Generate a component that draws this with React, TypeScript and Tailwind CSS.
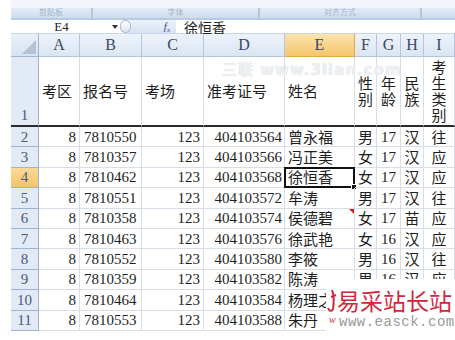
import React from 'react';

const serif = { fontFamily: '"Liberation Serif", "Noto Sans CJK SC", serif' };
const cjkFont = { fontFamily: '"Noto Sans CJK SC", sans-serif' };

const cols = ['A', 'B', 'C', 'D', 'E', 'F', 'G', 'H', 'I'];

// rows 10 and 11 lose their last columns under the site watermark
const rows: string[][] = [
  ['8', '7810550', '123', '404103564', '曾永福', '男', '17', '汉', '往'],
  ['8', '7810357', '123', '404103566', '冯正美', '女', '17', '汉', '应'],
  ['8', '7810462', '123', '404103568', '徐恒香', '女', '17', '汉', '应'],
  ['8', '7810551', '123', '404103572', '牟涛', '男', '17', '汉', '往'],
  ['8', '7810358', '123', '404103574', '侯德碧', '女', '17', '苗', '应'],
  ['8', '7810463', '123', '404103576', '徐武艳', '女', '16', '汉', '应'],
  ['8', '7810552', '123', '404103580', '李筱', '男', '16', '汉', '往'],
  ['8', '7810359', '123', '404103582', '陈涛', '男', '16', '汉', '应'],
  ['8', '7810464', '123', '404103584', '杨理之', '', '', '', ''],
  ['8', '7810553', '123', '404103588', '朱丹', '', '', '', ''],
];

// per-column alignment of data cells
const align = [
  'justify-end pr-[3px]',
  'justify-start pl-[4px]',
  'justify-end pr-[3px]',
  'justify-end pr-[2px]',
  'justify-start pl-[3px]',
  'justify-center',
  'justify-center',
  'justify-center',
  'justify-center',
];

const cell = 'border-r border-b border-[#d8dee8] flex items-center text-[15px] leading-[18px] text-[#1e1e1e] whitespace-nowrap';
const rowHead = 'border-r border-b border-[#9fb4cf] flex items-center justify-center text-[15px] leading-[18px] text-[#4a5b7b]';

const headers = [
  { t: ['考区'], c: 'justify-start pl-[3px]' },
  { t: ['报名号'], c: 'justify-start pl-[3px]' },
  { t: ['考场'], c: 'justify-start pl-[3px]' },
  { t: ['准考证号'], c: 'justify-start pl-[3px]' },
  { t: ['姓名'], c: 'justify-start pl-[3px]' },
  { t: ['性', '别'], c: 'justify-center' },
  { t: ['年', '龄'], c: 'justify-center' },
  { t: ['民', '族'], c: 'justify-center' },
  { t: ['考', '生', '类', '别'], c: 'justify-center' },
];

export default function App() {
  return (
    <div className="relative w-[455px] h-[340px] bg-white overflow-hidden" style={serif}>
      {/* ribbon remnants */}
      <div className="h-[8px] ml-[11px] bg-[#f2f6fb]" />
      <div className="h-[10px] ml-[11px] bg-gradient-to-b from-[#e3ecf7] to-[#cddcee] flex text-[8px] leading-[10px] text-[#a3b5cd]">
        <div className="w-[80px] flex justify-center items-center">剪贴板</div>
        <div className="w-[2px] border-x border-[#b3c6de]" />
        <div className="w-[165px] flex justify-center items-center">字体</div>
        <div className="w-[2px] border-x border-[#b3c6de]" />
        <div className="w-[160px] flex justify-center items-center">对齐方式</div>
        <div className="w-[2px] border-x border-[#b3c6de]" />
      </div>
      <div className="h-[2px] ml-[11px] bg-[#b7cbe3]" />

      {/* formula bar */}
      <div className="h-[14px] ml-[11px] flex items-center bg-white border-b border-[#c9d6e8]">
        <div className="w-[101px] flex items-center justify-center text-[13px] leading-[14px] text-[#222]">E4</div>
        <div className="w-[8px] flex items-center">
          <svg width="6" height="4" viewBox="0 0 6 4"><path d="M0 0h6L3 4z" fill="#333" /></svg>
        </div>
        <div className="w-[56px] h-[13px] flex items-center rounded-l-full bg-gradient-to-b from-[#eef3fa] to-[#d6e2f1] relative">
          <div className="w-[11px] h-[13px] rounded-full border border-[#9db4d1] bg-gradient-to-b from-white to-[#dbe6f3]" />
          <span className="absolute right-[6px] italic text-[11px] leading-[13px] text-[#3d4f6f]">f<sub className="text-[7px]">x</sub></span>
        </div>
        <div className="pl-[8px] text-[14px] leading-[14px] text-[#222]" style={cjkFont}>徐恒香</div>
      </div>

      {/* sheet grid */}
      <div className="grid grid-cols-[11px_28px_41px_62px_62px_81px_70px_22px_24px_23px_31px] grid-rows-[23px_70px_repeat(10,20.4px)]">
        {/* column header row */}
        <div className="bg-white" />
        <div className="bg-gradient-to-b from-[#e9f0f9] to-[#d7e2f0] border-r border-b border-[#9fb4cf] relative">
          <svg className="absolute right-[2px] bottom-[2px]" width="14" height="14" viewBox="0 0 14 14">
            <path d="M14 0V14H0z" fill="#b4c2d4" />
          </svg>
        </div>
        {cols.map((c) => (
          <div
            key={c}
            className={`${c === 'E' ? 'bg-gradient-to-b from-[#fbe3ad] to-[#f6c56c] border-[#e0a94a]' : 'bg-gradient-to-b from-[#eef3fa] to-[#dbe5f2] border-[#b5c6dc]'} border-r border-b flex items-center justify-center text-[16px] text-[#384868]`}
          >
            {c}
          </div>
        ))}

        {/* row 1 */}
        <div className="bg-white" />
        <div className="border-r border-b-2 border-[#9fb4cf] border-b-[#2a2a2a] bg-[#e2eaf6] flex items-end justify-center pb-[1px] text-[15px] leading-[18px] text-[#4a5b7b]">1</div>
        {headers.map((h, i) => (
          <div
            key={i}
            className={`border-r border-b-2 border-r-[#d8dee8] border-b-[#2a2a2a] flex items-center ${h.c} text-[15px] text-[#1e1e1e] whitespace-nowrap`}
            style={cjkFont}
          >
            <div className="flex flex-col items-center leading-[16px]">
              {h.t.map((t, j) => (
                <span key={j}>{t}</span>
              ))}
            </div>
          </div>
        ))}

        {/* data rows */}
        {rows.map((r, ri) => {
          const n = ri + 2;
          const sel = n === 4;
          return (
            <React.Fragment key={n}>
              <div className="bg-white" />
              <div className={`${rowHead} ${sel ? 'bg-gradient-to-b from-[#fad999] to-[#f5c36a]' : 'bg-[#e2eaf6]'}`}>{n}</div>
              {r.map((v, ci) => {
                const cjk = ci >= 4 && ci !== 6;
                return (
                  <div
                    key={ci}
                    className={`${cell} ${align[ci]} relative`}
                    style={cjk ? cjkFont : undefined}
                  >
                    {v}
                    {sel && ci === 4 && (
                      <div className="absolute inset-[-1px] border-2 border-[#111]">
                        <div className="absolute right-[-4px] bottom-[-4px] w-[6px] h-[6px] bg-[#111] border border-white" />
                      </div>
                    )}
                    {n === 6 && ci === 4 && (
                      <svg className="absolute right-0 top-0" width="5" height="5" viewBox="0 0 5 5">
                        <path d="M0 0h5v5z" fill="#d02020" />
                      </svg>
                    )}
                  </div>
                );
              })}
            </React.Fragment>
          );
        })}
      </div>

      {/* faint site watermark near top */}
      <div
        className="absolute left-[222px] top-[59px] text-[15px] font-bold text-[#eef0f3] tracking-[1px] whitespace-nowrap"
        style={{ fontFamily: '"DejaVu Sans", "Noto Sans CJK SC", sans-serif', textShadow: '0 0 1px #c9cfd8' }}
      >
        三联 www.3lian.com
      </div>

      {/* bottom right watermark */}
      <div className="absolute left-[326px] top-[279px] right-0 bottom-0 bg-white">
        <svg className="absolute left-[1px] top-[10px]" width="10" height="24" viewBox="0 0 10 24">
          <path d="M5 1 C7 6 7 14 6 20 C5 23 2 22 1 19 M4 8 L9 6" stroke="#d0283c" strokeWidth="2" fill="none" />
        </svg>
        <div
          className="absolute left-[11px] top-[8px] text-[23px] leading-[26px] text-[#d3263d] whitespace-nowrap"
          style={cjkFont}
        >
          易采站长站
        </div>
        <div className="absolute left-[3px] top-[35px] text-[10px] leading-[12px] italic text-[#c03040]" style={serif}>w</div>
        <div
          className="absolute left-[13px] top-[34px] text-[14px] leading-[18px] text-[#9a9a9a] tracking-[0.5px] whitespace-nowrap"
          style={{ fontFamily: '"Liberation Mono", monospace' }}
        >
          www.easck.com
        </div>
      </div>
    </div>
  );
}
